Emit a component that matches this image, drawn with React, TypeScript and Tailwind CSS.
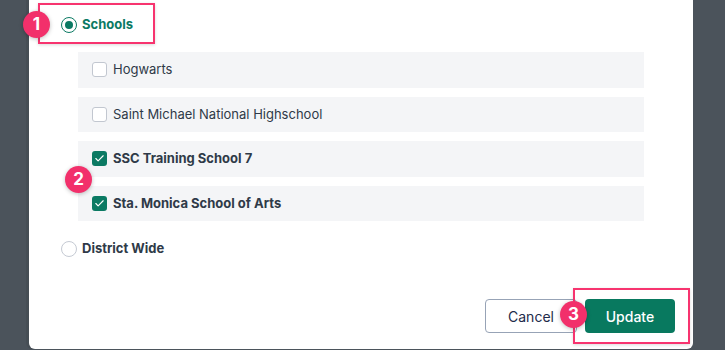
import { Check } from "lucide-react";

const schools = [
  { name: "Hogwarts", checked: false },
  { name: "Saint Michael National Highschool", checked: false },
  { name: "SSC Training School 7", checked: true },
  { name: "Sta. Monica School of Arts", checked: true },
];

function Badge({ n, className }: { n: number; className: string }) {
  return (
    <div
      className={`absolute z-20 flex h-[27px] w-[27px] items-center justify-center rounded-full bg-[#f2306b] text-[17px] font-bold leading-none text-white shadow-[0_1px_4px_rgba(0,0,0,0.25)] ${className}`}
    >
      {n}
    </div>
  );
}

function Radio({ on }: { on: boolean }) {
  return (
    <span
      className={`flex h-4 w-4 items-center justify-center rounded-full border-[1.5px] bg-white ${on ? "border-[#0b7a63]" : "border-[#c5cad3]"}`}
    >
      {on && <span className="h-2 w-2 rounded-full bg-[#0b7a63]" />}
    </span>
  );
}

export default function App() {
  return (
    <div className="flex h-[350px] w-[725px] bg-[#4b535b] pl-[29px] font-['Inter',sans-serif]">
      <div className="relative flex h-[349px] w-[664px] flex-col rounded-b-md bg-white pl-[32px] shadow-[-3px_0_0_rgba(0,0,0,0.06)]">
        {/* Schools radio */}
        <div className="relative flex h-[48px] items-center gap-[5px] pt-[1px]">
          <Radio on />
          <span className="text-[13px] font-bold text-[#0b7a63]">Schools</span>
          <div className="pointer-events-none absolute left-[-23px] top-[3px] h-[41px] w-[117px] border-2 border-[#f7346f] shadow-[0_1px_3px_rgba(0,0,0,0.15)]" />
          <Badge n={1} className="left-[-38px] top-[11px]" />
        </div>

        {/* School list */}
        <div className="relative ml-[17px] mr-[49px] flex flex-col gap-[9px] pt-[4px]">
          {schools.map((s) => (
            <div key={s.name} className="flex h-[35.5px] items-center gap-[6px] bg-[#f4f5f7] pl-[14px]">
              {s.checked ? (
                <span className="flex h-[15px] w-[15px] items-center justify-center rounded-[3px] bg-[#0b7a63]">
                  <Check size={11} strokeWidth={2.5} className="text-white" />
                </span>
              ) : (
                <span className="h-[15px] w-[15px] rounded-[3px] border border-[#c2c7d0] bg-white" />
              )}
              <span
                className={`text-[13px] text-[#2f3a48] ${s.checked ? "font-bold" : "font-normal"}`}
              >
                {s.name}
              </span>
            </div>
          ))}
          <Badge n={2} className="left-[-13px] top-[118px]" />
        </div>

        {/* District wide */}
        <div className="mt-[18px] flex items-center gap-[5px] pl-0">
          <Radio on={false} />
          <span className="text-[13px] font-bold text-[#2f3a48]">District Wide</span>
        </div>

        {/* Footer */}
        <div className="relative mr-[18px] mt-auto mb-[16px] flex justify-end gap-[8px]">
          <button className="h-[34px] w-[92px] rounded-[4px] border border-[#97a3b6] bg-white text-[14px] text-[#1e2b4a]">
            Cancel
          </button>
          <button className="h-[34px] w-[90px] rounded-[4px] bg-[#08795f] text-[14px] font-medium text-white">
            Update
          </button>
          <div className="pointer-events-none absolute right-[-15px] top-[-11px] h-[56px] w-[117px] border-2 border-[#f7346f] shadow-[0_1px_3px_rgba(0,0,0,0.15)]" />
          <Badge n={3} className="right-[88px] top-[2px]" />
        </div>
      </div>
    </div>
  );
}
